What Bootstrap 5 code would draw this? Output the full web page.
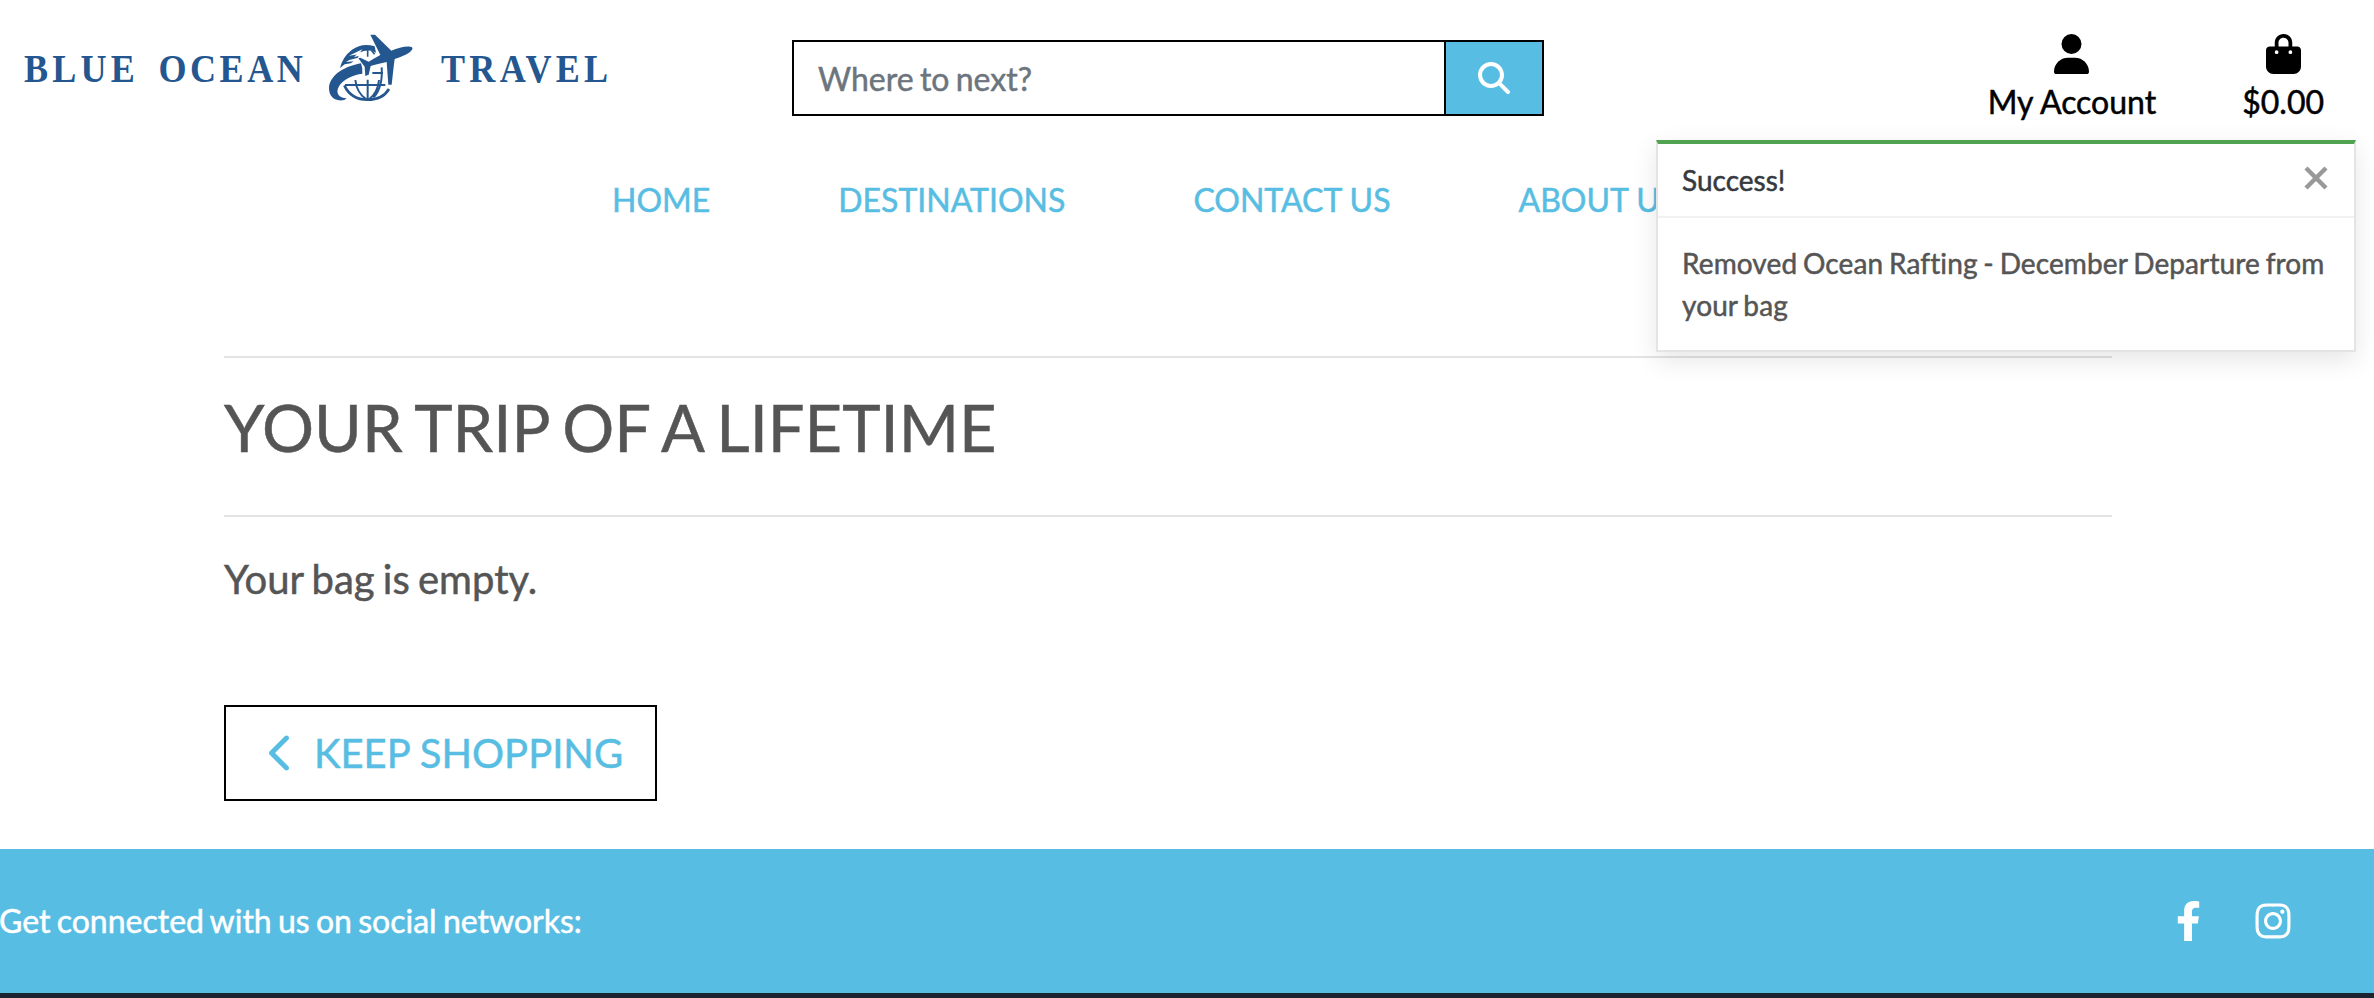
<!DOCTYPE html>
<html lang="en">
<head>
<meta charset="utf-8">
<meta name="viewport" content="width=device-width, initial-scale=1">
<title>Blue Ocean Travel</title>
<link href="https://cdn.jsdelivr.net/npm/bootstrap@5.3.0/dist/css/bootstrap.min.css" rel="stylesheet">
<style>
  body { font-family: Lato, sans-serif; font-size: 32px; line-height: 48px; color: #555; background: #fff; height: 998px; overflow: hidden; word-spacing: -.06em; -webkit-text-stroke: .5px currentColor; }
  svg { -webkit-text-stroke: 0; word-spacing: 0; }
  .topbar { height: 152px; }
  .brand { width: 640px; height: 130px; }
  .search-box { width: 752px; height: 76px; margin: 40px 0 0 152px; }
  .search-box .form-control, .search-box .btn { border: 2px solid #000; border-radius: 0; }
  .search-box .form-control { font-size: 32px; padding: 2px 24px 0; color: #555; word-spacing: -.06em; }
  .search-box .form-control::placeholder { color: #6c757d; opacity: 1; -webkit-text-stroke: .5px #6c757d; }
  .search-box .btn { flex: 0 0 100px; margin-left: -2px; background: #58bde2; padding: 0; line-height: 0; }
  .user-links { margin: 34px 50px 0 auto; gap: 86px; word-spacing: 0; }
  .user-links a { color: #000; }
  .user-links svg { display: block; margin-bottom: 4px; }
  .main-links { padding: 24px 0 0 612px; height: 204px; gap: 128px; word-spacing: 0; }
  .main-links a, .keep { color: #58bde2; }
  .rule { height: 2px; background: #e4e4e4; }
  .bag { margin-left: 224px; width: 1888px; }
  .bag h1 { font-size: 65px; line-height: 78px; margin: 30px 0 49px; font-weight: 400; word-spacing: -.048em; }
  .bag .note { font-size: 40px; line-height: 60px; margin: 32px 0 96px; word-spacing: -.05em; }
  .keep { border: 2px solid #000; border-radius: 0; width: 433px; height: 96px; font-size: 40px; padding: 0 0 0 43px; gap: 20px; word-spacing: 0; -webkit-text-stroke: .5px currentColor; }
  .social { height: 144px; background: #58bde2; margin-top: 48px; padding-right: 81px; color: #fff; }
  .social-icons { gap: 51px; }
  .connect { margin-left: -1px; }
  .dark-strip { height: 5px; background: #1c2331; }
  .toast.notice { position: absolute; left: 1656px; top: 140px; width: 700px; max-width: none; height: 212px; border: 2px solid rgba(0,0,0,.1); border-top: 4px solid #51a351; border-radius: 0; background: #fff; font-size: 28px; line-height: 42px; box-shadow: 0 8px 24px rgba(0,0,0,.1); }
  .notice .toast-header { height: 74px; padding: 0 26px 0 24px; color: #343a40; border-bottom: 2px solid #f2f2f2; border-radius: 0; background: #fff; }
  .notice .toast-header svg { margin-top: -5px; }
  .notice .toast-body { padding: 24px 20px 24px 24px; white-space: nowrap; word-spacing: -1.5px; letter-spacing: .11px; }
</style>
</head>
<body>
<header>
  <div class="topbar d-flex align-items-start">
    <a href="#" class="brand" aria-label="Blue Ocean Travel">
      <svg class="d-block" width="640" height="130" viewBox="0 0 640 130">
        <g fill="#24578f" font-family="'Liberation Serif', serif" font-weight="700" font-size="41">
          <text transform="translate(24 82) scale(.88 1)" textLength="126" lengthAdjust="spacing">BLUE</text>
          <text transform="translate(158.500 82) scale(.88 1)" textLength="164" lengthAdjust="spacing">OCEAN</text>
          <text transform="translate(441 81.500) scale(.88 1)" textLength="190" lengthAdjust="spacing">TRAVEL</text>
        </g>
        <g transform="translate(310 20) scale(.33333)" fill="#24578f">
          <path d="M181 44H195L244 92C264 84 284 78 301 80Q309 81 307 88C300 101 278 109 254 117L251 140 245 194H235L230 126C213 130 194 134 182 138L176 164 166 168 164 140 145 115 151 113 176 125C188 118 199 111 211 105Z"/>
          <path d="M153 130Q159 146 157 161C129 164 98 179 87 199C75 220 87 234 110 235L103 240C75 246 57 230 57 205C58 171 94 141 153 130Z"/>
          <path d="M90 144Q98 110 126 89Q157 67 194 79L198 98 184 92Q151 88 132 111L146 108 144 113 118 120 108 126 131 124 122 130 104 133Z"/>
          <path d="M117 107L157 88 146 103Z" fill="#fff"/>
          <g fill="none" stroke="#24578f" stroke-width="7">
            <path d="M173 88V110M185 92L194 103" stroke-width="5"/>
            <path d="M105 195H226M173 179V240M187 159H219M215 142Q219 203 190 233M136 180Q140 218 168 237M207 180Q203 218 178 237" stroke-width="6"/>
            <path d="M103 196Q123 239 173 239Q218 239 237 207" stroke-width="8"/>
          </g>
        </g>
      </svg>
    </a>
    <form class="search-box d-flex">
      <input class="form-control" type="text" placeholder="Where to next?">
      <button class="btn" type="button" aria-label="Search">
        <svg width="32" height="32" viewBox="0 0 512 512" fill="#fff"><path d="M416 208c0 45.900-14.900 88.300-40 122.700L502.600 457.400c12.500 12.500 12.500 32.800 0 45.300s-32.800 12.500-45.300 0L330.700 376c-34.400 25.200-76.800 40-122.700 40C93.100 416 0 322.900 0 208S93.100 0 208 0S416 93.100 416 208zM208 352a144 144 0 1 0 0-288 144 144 0 1 0 0 288z"/></svg>
      </button>
    </form>
    <div class="user-links d-flex">
      <a href="#" class="d-flex flex-column align-items-center text-decoration-none">
        <svg width="35" height="40" viewBox="0 0 448 512"><path d="M224 256A128 128 0 1 0 224 0a128 128 0 1 0 0 256zm-45.700 48C79.800 304 0 383.800 0 482.300C0 498.700 13.300 512 29.700 512l388.600 0c16.400 0 29.700-13.300 29.700-29.700C448 383.800 368.200 304 269.700 304l-91.400 0z"/></svg>
        <span>My Account</span>
      </a>
      <a href="#" class="d-flex flex-column align-items-center text-decoration-none">
        <svg width="35" height="40" viewBox="0 0 448 512"><path d="M160 112c0-35.300 28.700-64 64-64s64 28.700 64 64v48H160V112zm-48 48H48c-26.500 0-48 21.500-48 48V416c0 53 43 96 96 96H352c53 0 96-43 96-96V208c0-26.500-21.500-48-48-48H336V112C336 50.100 285.900 0 224 0S112 50.100 112 112v48zm24 48a24 24 0 1 1 0 48 24 24 0 1 1 0-48zm152 24a24 24 0 1 1 48 0 24 24 0 1 1 -48 0z"/></svg>
        <span>$0.00</span>
      </a>
    </div>
  </div>
  <nav class="main-links d-flex">
    <a class="text-decoration-none" href="#">HOME</a>
    <a class="text-decoration-none" href="#">DESTINATIONS</a>
    <a class="text-decoration-none" href="#">CONTACT US</a>
    <a class="text-decoration-none" href="#">ABOUT US</a>
  </nav>
</header>
<main class="bag">
  <div class="rule"></div>
  <h1>YOUR TRIP OF A LIFETIME</h1>
  <div class="rule"></div>
  <p class="note">Your bag is empty.</p>
  <a href="#" class="btn keep d-flex align-items-center">
    <svg width="25" height="40" viewBox="0 0 320 512" fill="currentColor"><path d="M9.400 233.400c-12.500 12.500-12.500 32.800 0 45.300l192 192c12.500 12.500 32.800 12.500 45.300 0s12.500-32.800 0-45.300L77.300 256 246.600 86.600c12.500-12.500 12.500-32.800 0-45.300s-32.800-12.500-45.300 0l-192 192z"/></svg>
    <span>KEEP SHOPPING</span>
  </a>
</main>
<footer>
  <section class="social d-flex align-items-center justify-content-between">
    <span class="connect">Get connected with us on social networks:</span>
    <div class="social-icons d-flex align-items-center">
      <svg width="27" height="40" viewBox="0 0 320 512" fill="#fff"><path d="M279.140 288l14.220-92.660h-88.910v-60.130c0-25.350 12.420-50.060 52.240-50.060h40.420V6.260S260.430 0 225.360 0c-73.220 0-121.080 44.380-121.080 124.720v70.620H22.890V288h81.390v224h100.170V288z"/></svg>
      <svg width="40" height="40" viewBox="0 0 448 512" fill="#fff"><path d="M224.100 141c-63.600 0-114.900 51.300-114.900 114.900s51.300 114.900 114.900 114.900S339 319.500 339 255.900 287.700 141 224.100 141zm0 189.600c-41.100 0-74.700-33.500-74.700-74.700s33.500-74.700 74.700-74.700 74.700 33.500 74.700 74.700-33.600 74.700-74.700 74.700zm146.400-194.300c0 14.900-12 26.800-26.800 26.800-14.900 0-26.800-12-26.800-26.800s12-26.800 26.800-26.800 26.800 12 26.800 26.800zm76.100 27.200c-1.700-35.900-9.900-67.700-36.200-93.900-26.200-26.200-58-34.400-93.900-36.200-37-2.100-147.900-2.100-184.900 0-35.800 1.700-67.600 9.900-93.900 36.100s-34.400 58-36.200 93.900c-2.100 37-2.100 147.900 0 184.900 1.700 35.900 9.900 67.700 36.200 93.900s58 34.400 93.900 36.200c37 2.100 147.900 2.100 184.900 0 35.900-1.700 67.700-9.900 93.900-36.200 26.200-26.200 34.400-58 36.200-93.900 2.100-37 2.100-147.800 0-184.800zM398.800 388c-7.800 19.600-22.900 34.700-42.600 42.600-29.500 11.700-99.500 9-132.100 9s-102.700 2.600-132.100-9c-19.600-7.800-34.700-22.900-42.600-42.600-11.700-29.500-9-99.500-9-132.100s-2.600-102.700 9-132.100c7.800-19.600 22.900-34.700 42.600-42.600 29.500-11.700 99.500-9 132.100-9s102.700-2.600 132.100 9c19.600 7.800 34.700 22.900 42.600 42.600 11.700 29.500 9 99.500 9 132.100s2.700 102.700-9 132.100z"/></svg>
    </div>
  </section>
  <div class="dark-strip"></div>
</footer>
<div class="toast notice show" role="alert">
  <div class="toast-header d-flex justify-content-between">
    <span>Success!</span>
    <svg width="24" height="24" viewBox="0 0 24 24" stroke="#999" stroke-width="4.500"><path d="M2 2L22 22M22 2L2 22"/></svg>
  </div>
  <div class="toast-body">Removed Ocean Rafting - December Departure from<br>your bag</div>
</div>
<script src="https://cdn.jsdelivr.net/npm/bootstrap@5.3.0/dist/js/bootstrap.bundle.min.js"></script>
</body>
</html>
